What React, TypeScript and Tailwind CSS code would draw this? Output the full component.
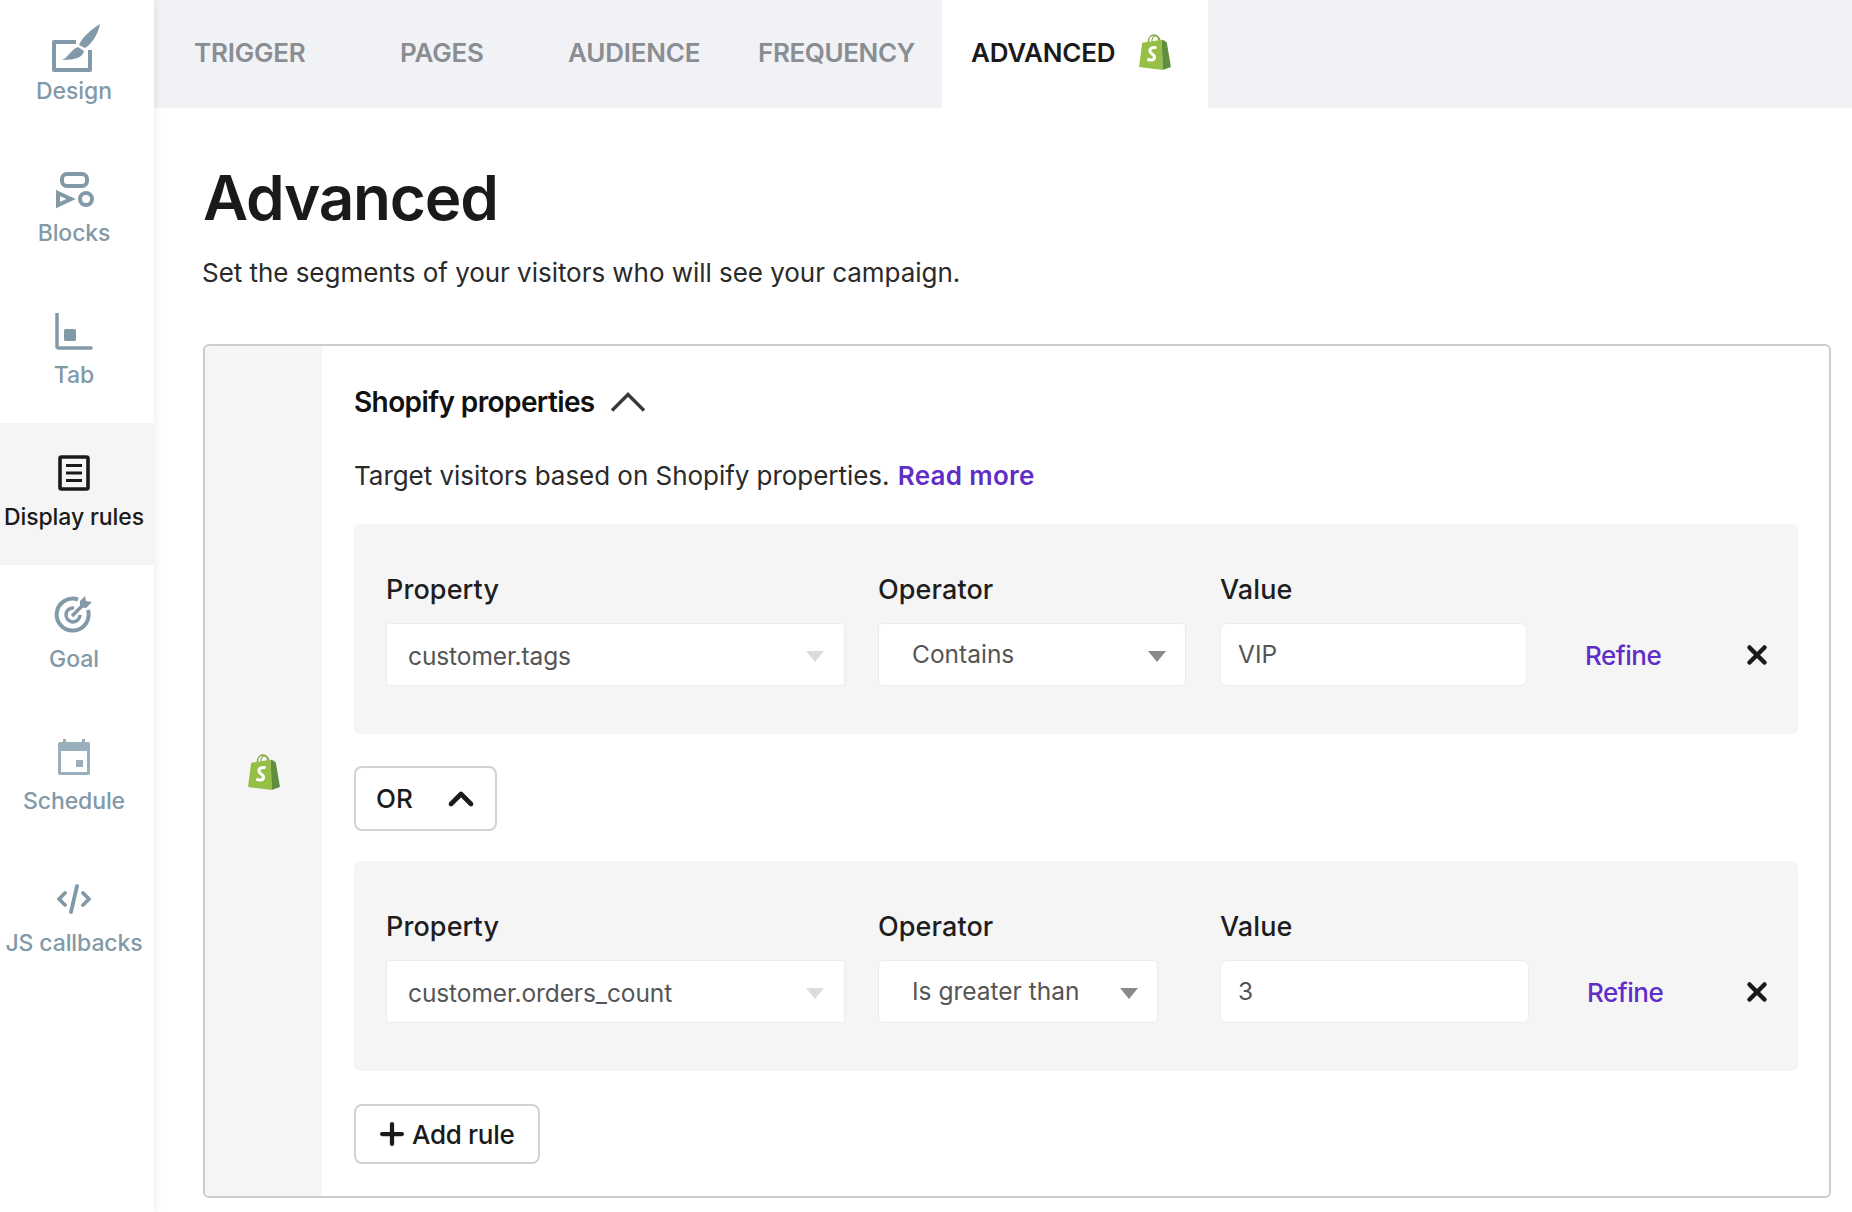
import React from 'react';
import { ChevronUp, Plus, X } from 'lucide-react';

const font = 'font-["Inter","Noto_Sans",sans-serif]';

const ShopifyBag = ({ className }: { className?: string }) => (
  <svg viewBox="0 0 32 36" className={className}>
    <path d="M10 8 C10 3 13 1 15.5 1 C18 1 20 3 20.5 7" fill="none" stroke="#7fa83a" strokeWidth="1.3" />
    <path d="M13.5 7 C13.5 4 15 2 17 2 C19.5 2 21 4 21.5 7" fill="none" stroke="#7fa83a" strokeWidth="1.1" />
    <path d="M1 32 L4 8.5 L23 5.5 L24 35 Z" fill="#95bf47" />
    <path d="M23 5.5 L26 6.5 L28 8.5 L32 32 L24 35 Z" fill="#5e8e3e" />
    <path d="M18 13.5 C15 12.5 11.5 13.5 11.5 16.5 C11.5 19.5 16 19.5 16 22.5 C16 25.5 12 26 9 24.5" fill="none" stroke="#fff" strokeWidth="3" />
  </svg>
);

const DesignIcon = () => (
  <svg viewBox="0 0 48 48" className="-mb-[7px] ml-[3px] h-[48px] w-[48px]" fill="#8299a8">
    <path d="M0 18 Q0 16 2 16 H24 V20 H4 V44 H36 V26 H40 V46 Q40 48 38 48 H2 Q0 48 0 46 Z" />
    <path d="M48 0 C46 10 40 20 33 24 L27 21 C30 13 40 5 48 0 Z" />
    <path d="M26 23 L32 27 C31 33 24 36 10 36 C17 33 18 26 26 23 Z" />
  </svg>
);

const BlocksIcon = () => (
  <svg viewBox="0 0 40 38" className="-mb-[3px] ml-[4px] h-[38px] w-[40px]" fill="none" stroke="#8299a8" strokeWidth="4">
    <rect x="6" y="2" width="25" height="12" rx="5" />
    <path d="M2 21 L15 27 L2 33 Z" />
    <circle cx="30" cy="27" r="6" />
  </svg>
);

const TabIcon = () => (
  <svg viewBox="0 0 38 38" className="-mb-[2px] h-[38px] w-[38px]">
    <path d="M2 1 V33 Q2 35 4 35 H36" fill="none" stroke="#8299a8" strokeWidth="3.5" strokeLinecap="round" />
    <rect x="9" y="16" width="12" height="12" rx="1.5" fill="#8299a8" />
  </svg>
);

const RulesIcon = () => (
  <svg viewBox="0 0 32 36" className="h-[36px] w-[32px]" fill="none" stroke="#1a1a1a">
    <rect x="2" y="2" width="28" height="32" rx="1.5" strokeWidth="3.6" />
    <path d="M8 10.5 H24 M8 18 H24 M8 25.5 H24" strokeWidth="3.2" />
  </svg>
);

const GoalIcon = () => (
  <svg viewBox="0 0 40 38" className="h-[38px] w-[40px]" fill="none" stroke="#8299a8">
    <path d="M24 4.5 A16 16 0 1 0 34 15" strokeWidth="4" />
    <path d="M20 13 A7 7 0 1 0 26 20" strokeWidth="3.5" />
    <path d="M18 21 L28 11" strokeWidth="3.5" />
    <path d="M26 6 L31 1 L32 6 L38 7 L32 13 L26 12 Z" fill="#8299a8" stroke="none" />
  </svg>
);

const ScheduleIcon = () => (
  <svg viewBox="0 0 32 36" className="h-[36px] w-[32px]" fill="#9aaebb">
    <path d="M5 0 H8 V3 H24 V0 H27 V3 H30 Q32 3 32 5 V34 Q32 36 30 36 H2 Q0 36 0 34 V5 Q0 3 2 3 H5 Z M3 12 V33 H29 V12 Z" fillRule="evenodd" clipRule="evenodd" />
    <rect x="18" y="21" width="7" height="7" />
  </svg>
);

const CodeIcon = () => (
  <svg viewBox="0 0 34 30" className="mb-[3px] h-[30px] w-[34px]" fill="none" stroke="#8299a8" strokeWidth="3.8" strokeLinecap="round" strokeLinejoin="round">
    <path d="M8 9 L2 15 L8 21" />
    <path d="M26 9 L32 15 L26 21" />
    <path d="M20 2 L14 28" />
  </svg>
);

const navItems = [
  { label: 'Design', icon: <DesignIcon />, active: false },
  { label: 'Blocks', icon: <BlocksIcon />, active: false },
  { label: 'Tab', icon: <TabIcon />, active: false },
  { label: 'Display rules', icon: <RulesIcon />, active: true },
  { label: 'Goal', icon: <GoalIcon />, active: false },
  { label: 'Schedule', icon: <ScheduleIcon />, active: false },
  { label: 'JS callbacks', icon: <CodeIcon />, active: false },
];

const Caret = ({ color }: { color: string }) => (
  <svg viewBox="0 0 18 11" className="mt-[4px] h-[11px] w-[18px]">
    <path d="M0 0 H18 L9 11 Z" fill={color} />
  </svg>
);

const Label = ({ children }: { children: React.ReactNode }) => (
  <div className="mb-[18px] text-[27px] leading-[30px] font-medium tracking-[0.1px] text-[#1e1e1e]">{children}</div>
);

type RuleProps = { property: string; operator: string; value: string; opWidth: string; valueGap: string; valueWidth: string };

const Rule = ({ property, operator, value, opWidth, valueGap, valueWidth }: RuleProps) => (
  <div className="flex h-[210px] rounded-md bg-[#f5f5f5] pl-[32px] pt-[51px]">
    <div className="w-[459px] shrink-0">
      <Label>Property</Label>
      <div className="flex h-[63px] w-[459px] items-center justify-between rounded-[3px] border border-[#ececec] bg-white pl-[21px] pr-[20px] text-[24.5px] tracking-[-0.1px] text-[#555]">
        <span className="pt-[3px]">{property}</span>
        <Caret color="#dcdcdc" />
      </div>
    </div>
    <div className="ml-[33px] shrink-0">
      <Label>Operator</Label>
      <div className={`flex h-[63px] items-center justify-between rounded-[5px] border border-[#ececec] bg-white pl-[33px] pr-[19px] text-[24.5px] text-[#555] ${opWidth}`}>
        {operator}
        <Caret color="#8a8a8a" />
      </div>
    </div>
    <div className={`shrink-0 ${valueGap}`}>
      <Label>Value</Label>
      <div className={`flex h-[63px] items-center rounded-[7px] border border-[#ececec] bg-white pl-[17px] text-[24.5px] text-[#555] ${valueWidth}`}>
        {value}
      </div>
    </div>
    <div className="mt-[48px] flex h-[63px] flex-1 items-center justify-between pr-[26px]">
      <span className="ml-[58px] pt-[2px] text-[26px] font-medium tracking-[-0.5px] text-[#5f2dc8]">Refine</span>
      <X size={30} strokeWidth={3.6} className="text-[#1a1a1a]" />
    </div>
  </div>
);

export default function App() {
  return (
    <div className={`flex h-[1212px] w-[1852px] overflow-hidden bg-white ${font}`}>
      <aside className="relative z-10 w-[154px] shrink-0 bg-white shadow-[3px_0_6px_rgba(0,0,0,0.05)]">
        <div className="-mt-[3px] flex flex-col">
          {navItems.map((item) => (
            <div
              key={item.label}
              className={`flex h-[142px] flex-col items-center pr-[6px] pt-[18px] ${item.active ? 'bg-[#f5f5f5] text-[#1a1a1a]' : 'text-[#8299a8]'}`}
            >
              <div className="flex h-[52px] items-end justify-center pb-[2px]">{item.icon}</div>
              <span className="mt-[9px] whitespace-nowrap text-[23px] leading-[30px] font-medium tracking-[-0.1px]">{item.label}</span>
            </div>
          ))}
        </div>
      </aside>

      <main className="min-w-0 flex-1">
        <nav className="flex h-[108px] items-center bg-[#f0f2f5] text-[26px] font-semibold tracking-[-0.2px] text-[#8a8d91]">
          <div className="w-[246px] pb-[4px] pl-[40px]">TRIGGER</div>
          <div className="w-[168px] pb-[4px]">PAGES</div>
          <div className="w-[190px] pb-[4px]">AUDIENCE</div>
          <div className="w-[184px] pb-[4px] tracking-[-0.4px]">FREQUENCY</div>
          <div className="flex h-full w-[266px] items-center bg-white pb-[4px] pl-[29px] text-[#1a1a1a]">
            ADVANCED
            <ShopifyBag className="ml-[23px] h-[37px] w-[33px]" />
          </div>
        </nav>

        <div className="pl-[49px] pr-[21px]">
          <h1 className="mt-[50px] text-[62px] leading-[80px] font-semibold tracking-[-1.2px] text-[#1a1a1a]">Advanced</h1>
          <p className="-ml-[1px] mt-[17px] text-[26px] leading-[36px] tracking-[-0.04px] text-[#2a2a2a]">Set the segments of your visitors who will see your campaign.</p>

          <section className="mt-[53px] flex h-[854px] overflow-hidden rounded-md border-2 border-[#cdcdcd]">
            <div className="flex w-[117px] shrink-0 items-center justify-center bg-[#f5f5f5] pt-[2px]">
              <ShopifyBag className="h-[37px] w-[33px]" />
            </div>
            <div className="min-w-0 flex-1 pl-[32px] pr-[31px]">
              <div className="mt-[38px] flex h-[36px] items-center text-[28px] font-semibold tracking-[-0.6px] text-[#111]">
                Shopify properties
                <svg viewBox="0 0 36 20" className="ml-[15px] h-[20px] w-[36px]" fill="none" stroke="#3a3a3a" strokeWidth="3.4">
                  <path d="M2 18.5 L18 2.5 L34 18.5" />
                </svg>
              </div>
              <p className="mt-[38px] text-[26px] leading-[36px] tracking-[-0.04px] text-[#2a2a2a]">
                Target visitors based on Shopify properties. <span className="ml-[1px] font-semibold tracking-[0.3px] text-[#5f2dc8]">Read more</span>
              </p>
              <div className="mt-[30px]">
                <Rule property="customer.tags" operator="Contains" value="VIP" opWidth="w-[308px]" valueGap="ml-[34px]" valueWidth="w-[307px]" />
              </div>
              <button className="mt-[32px] flex h-[65px] w-[143px] items-center justify-between rounded-lg border-2 border-[#d2d2d2] pl-[20px] pr-[20px] text-[26px] font-medium text-[#1a1a1a]">
                OR
                <ChevronUp size={40} strokeWidth={2.8} className="-mr-[6px]" />
              </button>
              <div className="mt-[30px]">
                <Rule property="customer.orders_count" operator="Is greater than" value="3" opWidth="w-[280px]" valueGap="ml-[62px]" valueWidth="w-[309px]" />
              </div>
              <button className="mt-[33px] flex h-[60px] w-[186px] items-center rounded-lg border-2 border-[#d2d2d2] pl-[22px] text-[26px] font-medium tracking-[-0.3px] text-[#1a1a1a]">
                <Plus size={34} strokeWidth={3} className="-ml-[3px] mr-[3px]" />
                Add rule
              </button>
            </div>
          </section>
        </div>
      </main>
    </div>
  );
}
